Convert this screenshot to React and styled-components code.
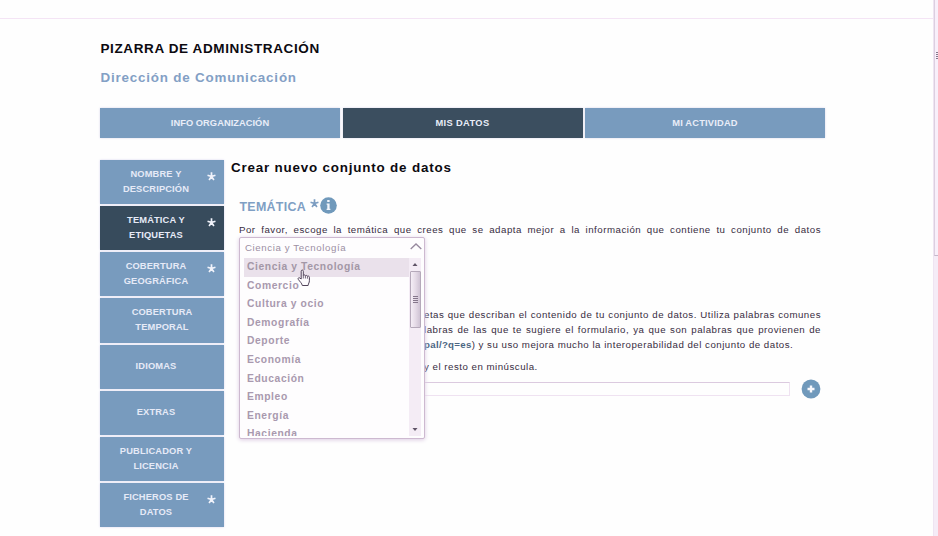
import React from "react";
import styled, { createGlobalStyle } from "styled-components";

const BLUE = "#789bbe";
const DARK = "#3b4e5f";

const Global = createGlobalStyle`
  * { box-sizing: border-box; }
  body { margin: 0; background: #fefefe; font-family: "Liberation Sans", Arial, sans-serif; overflow: hidden; }
`;

const Window = styled.div`
  display: flex;
  width: 938px;
  height: 536px;
  overflow: hidden;
`;

const Page = styled.div`
  flex: 1;
  min-width: 0;
`;

const TopBar = styled.div`
  height: 19px;
  border-bottom: 1px solid #f4e4f5;
`;

const Content = styled.main`
  width: 725px;
  margin-left: 100px;
`;

const Title = styled.h1`
  margin: 0;
  padding: 21px 0 0 0.5px;
  font-size: 13.5px;
  line-height: 17px;
  letter-spacing: 0.62px;
  color: #0c0a10;
  white-space: nowrap;
`;

const Subtitle = styled.h2`
  margin: 13px 0 0 0.5px;
  font-size: 13.4px;
  line-height: 16px;
  letter-spacing: 0.8px;
  color: #83a0c5;
`;

const Tabs = styled.nav`
  display: grid;
  grid-template-columns: repeat(3, 1fr);
  gap: 2.5px;
  margin-top: 22px;
`;

const Tab = styled.a`
  height: 30px;
  background: ${(p) => (p.$active ? DARK : BLUE)};
  box-shadow: 0 0 2px #d6d4ea;
  color: #e9edf8;
  font-size: 9.3px;
  font-weight: bold;
  line-height: 30px;
  letter-spacing: ${(p) => p.$tracking}px;
  text-align: center;
`;

const Columns = styled.div`
  display: flex;
  margin-top: 22px;
`;

const Sidebar = styled.nav`
  display: flex;
  flex-direction: column;
  gap: 2px;
  width: 124px;
`;

const Step = styled.a`
  display: grid;
  grid-template-columns: 1fr ${(p) => (p.$centered ? "0px" : "12px")};
  align-items: center;
  height: 44.15px;
  background: ${(p) => (p.$active ? "#374b5c" : BLUE)};
  box-shadow: 0 0 2px #d6d4ee;
  color: #e6eaf7;
  font-size: 9.3px;
  font-weight: bold;
  line-height: 15px;
  letter-spacing: 0.15px;
  text-align: center;
  white-space: pre-line;
`;

const StarSlot = styled.span`
  display: flex;
  margin-left: -5px;
  padding-bottom: 11px;
`;

const Section = styled.section`
  flex: 1;
  padding-left: 7px;
`;

const SectionTitle = styled.h3`
  margin: 0;
  font-size: 13.4px;
  line-height: 16px;
  letter-spacing: 0.81px;
  color: #0c0a10;
`;

const FieldHeading = styled.div`
  display: flex;
  align-items: center;
  height: 18px;
  margin: 20px 0 0 8.5px;
`;

const FieldName = styled.span`
  width: 70.5px;
  padding-top: 4px;
  font-size: 12.4px;
  font-weight: bold;
  line-height: 16px;
  letter-spacing: 0.3px;
  color: #7f9fc4;
`;

const FieldStar = styled.span`
  display: flex;
  padding-bottom: 4px;
  margin-right: 1px;
`;

const Text = styled.p`
  margin: 0;
  padding: ${(p) => p.$pad || 0};
  color: #382c3e;
  font-size: 9.7px;
  line-height: 15px;
  letter-spacing: 0.5px;
  white-space: nowrap;
`;

const Line = styled.span`
  display: block;
  text-align-last: ${(p) => (p.$justify ? "justify" : "left")};
  white-space: normal;
`;

const Link = styled.span`
  color: #4c6683;
  font-weight: bold;
  letter-spacing: 0.3px;
`;

const FieldBody = styled.div`
  width: 582px;
  margin-left: 8px;
`;

const SelectAnchor = styled.div`
  position: relative;
  height: 70px;
`;

const Dropdown = styled.div`
  position: absolute;
  z-index: 2;
  top: 0;
  left: 0;
  width: 185.5px;
  height: 202px;
  border: 1px solid #cdb9d0;
  border-radius: 2px;
  background: #fefdfe;
  box-shadow: 0 1px 4px #dccbe2;
`;

const Selected = styled.div`
  display: flex;
  justify-content: space-between;
  height: 20px;
  padding: 0 2px 0 5px;
  color: #9c8fa3;
  font-size: 9.7px;
  line-height: 20px;
  letter-spacing: 0.6px;

  svg { margin-top: 3px; }
`;

const ListArea = styled.div`
  display: flex;
  height: 178px;
  padding: 0 2.5px 0 4px;
`;

const Options = styled.div`
  flex: 1;
  overflow: hidden;
`;

const Option = styled.div`
  height: 18.6px;
  padding-left: 3px;
  background: ${(p) => (p.$active ? "#eae1eb" : "transparent")};
  color: ${(p) => (p.$active ? "#a397a6" : "#a999ae")};
  font-size: 10.3px;
  font-weight: bold;
  line-height: 18.6px;
  letter-spacing: 0.6px;
`;

const ListScroll = styled.div`
  display: flex;
  flex-direction: column;
  align-items: center;
  justify-content: space-between;
  width: 12px;
  background: #f4ecf5;
`;

const ListThumb = styled.div`
  display: flex;
  align-items: center;
  justify-content: center;
  width: 11px;
  height: 57px;
  margin-bottom: auto;
  border: 1px solid #b5a9ba;
  border-radius: 1px;
  background: linear-gradient(90deg, #f5eef6, #e5dbe7 50%, #cfc3d4);
`;

const Cursor = styled.svg`
  position: absolute;
  z-index: 3;
  left: 57px;
  top: 31px;
`;

const TagRow = styled.div`
  display: flex;
  align-items: center;
  justify-content: space-between;
  height: 20px;
  margin-top: 5px;
`;

const TagInput = styled.div`
  width: 551px;
  height: 14px;
  border: 1px solid #efe2f1;
  border-top: 1px solid #dbcadf;
`;

const PageScroll = styled.aside`
  width: 5px;
  background: #f5ecf7;
  border-left: 1px solid #efe4f2;
`;

const PageThumb = styled.div`
  display: flex;
  justify-content: flex-end;
  height: 256px;
  padding-top: 52px;
  border-left: 1px solid #dccfe0;
  border-bottom: 1px solid #c5b8ca;
  background: #f8effa;
`;

const Star = ({ size, color }) => (
  <svg width={size} height={size} viewBox="0 0 10 10" stroke={color} strokeWidth="1.9">
    <path d="M5 5V.4M5 5L.6 3.6M5 5l4.4-1.4M5 5L2.3 8.8M5 5l2.7 3.8" />
  </svg>
);

const Grip = ({ width }) => (
  <svg width={width} height="7" stroke="#85778b">
    <path d={`M0 .5h${width}M0 2.5h${width}M0 4.5h${width}M0 6.5h${width}`} />
  </svg>
);

const ArrowCell = ({ down }) => (
  <svg width="12" height="13" fill="#5f5366">
    <path d={down ? "M3.5 5h5L6 8z" : "M3.5 8h5L6 5z"} />
  </svg>
);

const tabs = [
  { label: "INFO ORGANIZACIÓN", tracking: 0.04 },
  { label: "MIS DATOS", active: true, tracking: 0.35 },
  { label: "MI ACTIVIDAD", tracking: 0.2 },
];

const steps = [
  { label: "NOMBRE Y\nDESCRIPCIÓN", star: true },
  { label: "TEMÁTICA Y\nETIQUETAS", star: true, active: true },
  { label: "COBERTURA\nGEOGRÁFICA", star: true },
  { label: "COBERTURA\nTEMPORAL", centered: true },
  { label: "IDIOMAS" },
  { label: "EXTRAS" },
  { label: "PUBLICADOR Y\nLICENCIA" },
  { label: "FICHEROS DE\nDATOS", star: true },
];

const options = [
  "Ciencia y Tecnología", "Comercio", "Cultura y ocio", "Demografía", "Deporte",
  "Economía", "Educación", "Empleo", "Energía", "Hacienda",
];

export default function App() {
  return (
    <Window>
      <Global />
      <Page>
        <TopBar />
        <Content>
          <Title>PIZARRA DE ADMINISTRACIÓN</Title>
          <Subtitle>Dirección de Comunicación</Subtitle>
          <Tabs>
            {tabs.map((t) => (
              <Tab key={t.label} $active={t.active} $tracking={t.tracking}>{t.label}</Tab>
            ))}
          </Tabs>
          <Columns>
            <Sidebar>
              {steps.map((s) => (
                <Step key={s.label} $active={s.active} $centered={s.centered}>
                  {s.label}
                  {s.star && <StarSlot><Star size={9} color="#f1f3fb" /></StarSlot>}
                </Step>
              ))}
            </Sidebar>
            <Section>
              <SectionTitle>Crear nuevo conjunto de datos</SectionTitle>
              <FieldHeading>
                <FieldName>TEMÁTICA</FieldName>
                <FieldStar><Star size={9} color="#7c9dc1" /></FieldStar>
                <svg width="17" height="17" viewBox="0 0 17 17">
                  <circle cx="8.5" cy="8.5" r="8.3" fill="#7099bb" />
                  <path d="M7.2 3h2.400v2H7.200zM6.600 6.400h3v5.400h.8v1.300H6.600v-1.300h.7V7.700h-.7z" fill="#f2f5fb" />
                </svg>
              </FieldHeading>
              <FieldBody>
                <Text $pad="8px 0 0">
                  <Line $justify>Por favor, escoge la temática que crees que se adapta mejor a la información que contiene tu conjunto de datos</Line>
                </Text>
                <SelectAnchor>
                  <Dropdown>
                    <Selected>
                      Ciencia y Tecnología
                      <svg width="12" height="10" fill="none" stroke="#97899e" strokeWidth="1.3">
                        <path d="M.7 8L6 3l5.3 5" />
                      </svg>
                    </Selected>
                    <ListArea>
                      <Options>
                        {options.map((o, i) => <Option key={o} $active={i === 0}>{o}</Option>)}
                      </Options>
                      <ListScroll>
                        <ArrowCell />
                        <ListThumb><Grip width={5} /></ListThumb>
                        <ArrowCell down />
                      </ListScroll>
                    </ListArea>
                    <Cursor width="14" height="18" viewBox="0 0 14 18">
                      <path d="M4.2 10V2.2C4.2.6 6.3.6 6.3 2.2v4.3c.3-.9 1.9-.8 2.1.3.5-.7 1.8-.5 2 .5.6-.6 2-.2 2 1v3.4c0 2-1 2.6-1.3 4.8H5.3C5 14.3 2.7 12.5 1.3 10.4.5 9 2 8.2 3 9.1z" fill="#fdfbfe" stroke="#51435a" />
                      <path d="M6.3 6.5v3M8.4 7v2.5M10.4 7.5v2.2" stroke="#51435a" strokeWidth=".8" />
                    </Cursor>
                  </Dropdown>
                </SelectAnchor>
                <Text $pad="0 0 0 185px">
                  <Line $justify>etas que describan el contenido de tu conjunto de datos. Utiliza palabras comunes</Line>
                  <Line $justify>labras de las que te sugiere el formulario, ya que son palabras que provienen de</Line>
                  <Line><Link>pal/?q=es</Link>) y su uso mejora mucho la interoperabilidad del conjunto de datos.</Line>
                </Text>
                <Text $pad="7px 0 0 185px"><Line>y el resto en minúscula.</Line></Text>
                <TagRow>
                  <TagInput />
                  <svg width="20" height="20">
                    <circle cx="10" cy="10" r="9.4" fill="#7099bb" />
                    <path d="M10 6.5v7M6.5 10h7" stroke="#f7f8fc" strokeWidth="2.4" />
                  </svg>
                </TagRow>
              </FieldBody>
            </Section>
          </Columns>
        </Content>
      </Page>
      <PageScroll><PageThumb><Grip width={2} /></PageThumb></PageScroll>
    </Window>
  );
}
